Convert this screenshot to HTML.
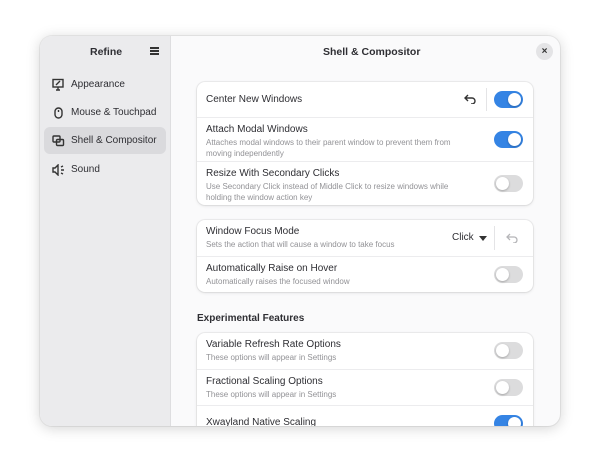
<!DOCTYPE html><html><head><style>
body{margin:0;width:600px;height:470px;background:#fff;font-family:"Liberation Sans","DejaVu Sans",sans-serif;position:relative;overflow:hidden}
.win{position:absolute;left:40px;top:36px;width:520px;height:390px;border-radius:12px;overflow:hidden;background:#fafafb;box-shadow:0 2px 14px rgba(0,0,0,.18),0 0 0 1px rgba(0,0,0,.06)}
.side{position:absolute;left:0;top:0;width:130px;height:100%;background:#ebebed;border-right:1px solid #dedee0}
.t{position:absolute;font-size:10.5px;color:#2e2e33}
.nav{position:absolute;left:4px;width:122px;height:27px;border-radius:6px;font-size:10px;color:#2e2e33;line-height:27px;padding-left:27px;box-sizing:border-box}
.nav.sel{background:#dadadd}
.card{position:absolute;left:157px;width:336px;background:#fff;border-radius:8px;box-shadow:0 0 0 1px rgba(0,0,0,.05),0 1px 3px rgba(0,0,0,.1)}
.row{position:relative;border-top:1px solid #ececee;box-sizing:border-box}
.row:first-child{border-top:0}
.ti{position:absolute;left:9px;font-size:10px;color:#2e2e33}
.su{position:absolute;left:9px;font-size:8px;color:#929296;line-height:11px}
.tg{position:absolute;right:10px;width:29px;height:17px;border-radius:9px;background:#dcdcdd}
.tg:after{content:"";position:absolute;left:2px;top:2px;width:13px;height:13px;border-radius:50%;background:#fff;box-shadow:0 1px 2px rgba(0,0,0,.25)}
.tg.on{background:#3584e4}.tg.on:after{left:14px}
</style></head><body>
<div class="win">
<div class="side">
<div class="t" style="left:50px;top:10px;font-weight:bold">Refine</div>
<div style="position:absolute;left:110px;top:11px;width:9px;height:1.5px;background:#333;box-shadow:0 3px 0 #333,0 6px 0 #333"></div>
<div class="nav" style="top:35px">Appearance</div>
<div class="nav" style="top:63px">Mouse &amp; Touchpad</div>
<div class="nav sel" style="top:91px">Shell &amp; Compositor</div>
<div class="nav" style="top:120px">Sound</div>
<svg style="position:absolute;left:12px;top:42px" width="12" height="13" viewBox="0 0 12 13" fill="none" stroke="#333" stroke-width="1.4"><rect x="1" y="1.5" width="10" height="7.5"/><path d="M4 12h4M6 9v3M4 7l4-4"/></svg>
<svg style="position:absolute;left:14px;top:71px" width="9" height="12" viewBox="0 0 9 12" fill="none" stroke="#333" stroke-width="1.4"><rect x="1" y="1" width="7" height="10" rx="3.5"/><path d="M4.5 3v2"/></svg>
<svg style="position:absolute;left:12px;top:99px" width="13" height="12" viewBox="0 0 13 12" fill="none" stroke="#333" stroke-width="1.4"><rect x="1" y="1" width="7" height="6" rx="1"/><rect x="4.5" y="4.5" width="7" height="6" rx="1"/></svg>
<svg style="position:absolute;left:12px;top:128px" width="13" height="12" viewBox="0 0 13 12" fill="none" stroke="#333" stroke-width="1.4"><path d="M1 4h2l3-3v10L3 8H1z"/><path d="M9 3l2-1M9 6h3M9 9l2 1"/></svg>
</div>
<div class="t" style="left:283px;top:10px;font-weight:bold">Shell &amp; Compositor</div>
<div style="position:absolute;left:496px;top:7px;width:17px;height:17px;border-radius:50%;background:#e4e4e6;text-align:center;line-height:17px;font-size:10px;font-weight:bold;color:#333">×</div>

<div class="card" style="top:46px">
<div class="row" style="height:35px"><div class="ti" style="top:12px">Center New Windows</div>
<svg style="position:absolute;left:267px;top:12px" width="12" height="10" viewBox="0 0 12 10" fill="none" stroke="#333" stroke-width="1.4"><path d="M4 1L1 4l3 3M1 4h7a3 3 0 0 1 0 6H7"/></svg>
<div style="position:absolute;left:289px;top:6px;width:1px;height:23px;background:#e4e4e6"></div>
<div class="tg on" style="top:9px"></div></div>
<div class="row" style="height:44px"><div class="ti" style="top:6px">Attach Modal Windows</div><div class="su" style="top:19px">Attaches modal windows to their parent window to prevent them from<br>moving independently</div><div class="tg on" style="top:13px"></div></div>
<div class="row" style="height:44px"><div class="ti" style="top:6px">Resize With Secondary Clicks</div><div class="su" style="top:19px">Use Secondary Click instead of Middle Click to resize windows while<br>holding the window action key</div><div class="tg" style="top:13px"></div></div>
</div>

<div class="card" style="top:184px">
<div class="row" style="height:36px"><div class="ti" style="top:6px">Window Focus Mode</div><div class="su" style="top:19px">Sets the action that will cause a window to take focus</div>
<div style="position:absolute;left:255px;top:12px;font-size:10px;color:#2e2e33">Click</div>
<div style="position:absolute;left:282px;top:16px;border:4px solid transparent;border-top:5px solid #333"></div>
<div style="position:absolute;left:297px;top:6px;width:1px;height:24px;background:#e4e4e6"></div>
<svg style="position:absolute;left:309px;top:13px" width="12" height="10" viewBox="0 0 12 10" fill="none" stroke="#b5b5b8" stroke-width="1.3"><path d="M4 1L1 4l3 3M1 4h7a3 3 0 0 1 0 6H7"/></svg></div>
<div class="row" style="height:36px"><div class="ti" style="top:6px">Automatically Raise on Hover</div><div class="su" style="top:19px">Automatically raises the focused window</div><div class="tg" style="top:9px"></div></div>
</div>

<div class="t" style="left:157px;top:277px;font-size:10px;font-weight:bold">Experimental Features</div>
<div class="card" style="top:297px">
<div class="row" style="height:36px"><div class="ti" style="top:6px">Variable Refresh Rate Options</div><div class="su" style="top:19px">These options will appear in Settings</div><div class="tg" style="top:9px"></div></div>
<div class="row" style="height:36px"><div class="ti" style="top:6px">Fractional Scaling Options</div><div class="su" style="top:19px">These options will appear in Settings</div><div class="tg" style="top:9px"></div></div>
<div class="row" style="height:36px"><div class="ti" style="top:11px">Xwayland Native Scaling</div><div class="tg on" style="top:9px"></div></div>
</div>
</div>
</body></html>
